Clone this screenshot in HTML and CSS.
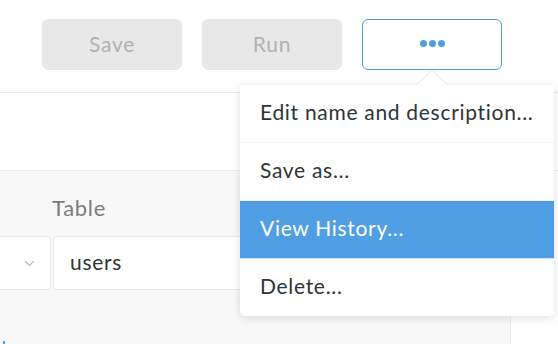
FILE: index.html
```html
<!DOCTYPE html>
<html lang="en">
  <head>
    <meta charset="UTF-8">
    <title>Question - Actions</title>
    <link rel="stylesheet" href="styles.css">
  </head>
  <body>
    <div class="page">
        <div class="toolbar">
            <button class="tool-button" disabled>Save</button>
            <button class="tool-button" disabled>Run</button>
            <button class="tool-button more-button">
                <span class="dot"></span><span class="dot"></span><span class="dot"></span>
            </button>
        </div>

        <div class="summary"></div>

        <div class="workspace">
            <div class="editor">
                <div class="field-label">Table</div>
                <div class="field-row">
                    <div class="field-box schema-box">
                        <svg class="chevron" width="11" height="7" viewBox="0 0 11 7">
                            <path d="M1 1 L5.5 5.5 L10 1" fill="none" stroke="#b5b5b5" stroke-width="1.1"/>
                        </svg>
                    </div>
                    <div class="field-box table-box">users</div>
                </div>
                <div class="field-marker"></div>
            </div>
            <div class="sidebar"></div>
        </div>

        <!-- actions popover, open -->
        <div class="popover">
            <div class="popover-arrow"></div>
            <ul class="menu">
                <li class="menu-item">Edit name and description...</li>
                <li class="menu-item">Save as...</li>
                <li class="menu-item active">View History...</li>
                <li class="menu-item">Delete...</li>
            </ul>
        </div>
    </div>
  </body>
</html>
```

FILE: styles.css
```css
body {
    margin: 0;
    padding: 0;
    font-family: Lato, 'Open Sans', sans-serif;
    letter-spacing: 0.7px;
    background: #ffffff;
    color: #2e3438;
    overflow: hidden;
}

.page {
    position: relative;
    width: 558px;
    height: 344px;
    overflow: hidden;
}

.toolbar {
    display: flex;
    justify-content: flex-end;
    gap: 20px;
    padding: 19px 56px 22px 0;
    border-bottom: 1px solid #ebebeb;
}

.tool-button {
    width: 140px;
    height: 51px;
    border: 1px solid #e8e8e8;
    border-radius: 6px;
    background: #e8e8e8;
    color: #b2b2b2;
    font-family: inherit;
    letter-spacing: 0.7px;
    font-size: 21px;
    padding: 0 0 3px;
}

.more-button {
    background: #ffffff;
    border-color: #509ee3;
    display: flex;
    align-items: center;
    justify-content: center;
    gap: 2px;
    padding: 0 0 2px;
}

.dot {
    width: 7px;
    height: 7px;
    border-radius: 50%;
    background: #509ee3;
}

.summary {
    height: 77px;
    border-bottom: 1px solid #ebebeb;
}

.workspace {
    display: flex;
    height: 173px;
}

.editor {
    width: 510px;
    background: #f8f8f8;
    padding-top: 24px;
    position: relative;
}

.sidebar {
    flex: 1;
    background: #ffffff;
    border-left: 1px solid #ebebeb;
}

.field-label {
    margin-left: 52px;
    font-size: 22px;
    line-height: 26px;
    color: #7c7c7c;
}

.field-row {
    display: flex;
    gap: 2px;
    margin-top: 15px;
    margin-left: -10px;
}

.field-box {
    box-sizing: border-box;
    height: 54px;
    background: #ffffff;
    border: 1px solid #e9e9e9;
    border-radius: 4px;
    display: flex;
    align-items: center;
    font-size: 21px;
    color: #2e3438;
}

.schema-box {
    width: 61px;
    justify-content: flex-end;
}

.chevron {
    margin-right: 15px;
}

.table-box {
    width: 260px;
    padding: 0 0 4px 16px;
}

.field-marker {
    position: absolute;
    left: 3px;
    bottom: 0;
    width: 2px;
    height: 3px;
    background: #509ee3;
}

.popover {
    position: absolute;
    top: 85px;
    left: 240px;
    width: 314px;
    background: #ffffff;
    border-radius: 0 0 5px 5px;
    box-shadow: 0 2px 10px rgba(0, 0, 0, 0.13);
}

.popover-arrow {
    position: absolute;
    top: -15px;
    left: 176px;
    width: 0;
    height: 0;
    border-left: 16px solid transparent;
    border-right: 16px solid transparent;
    border-bottom: 15px solid #e6e6e6;
}

.popover-arrow::after {
    content: "";
    position: absolute;
    top: 1px;
    left: -15px;
    border-left: 15px solid transparent;
    border-right: 15px solid transparent;
    border-bottom: 14px solid #ffffff;
}

.menu {
    list-style: none;
    margin: 0;
    padding: 0;
}

.menu-item {
    height: 53px;
    line-height: 53px;
    padding: 0 0 4px 20px;
    font-size: 21px;
    color: #2e3438;
    border-bottom: 1px solid #f3f3f3;
}

.menu-item:last-child {
    border-bottom: none;
}

.menu-item.active {
    background: #509ee3;
    color: #ffffff;
    border-bottom-color: #cfe4f6;
}
```
